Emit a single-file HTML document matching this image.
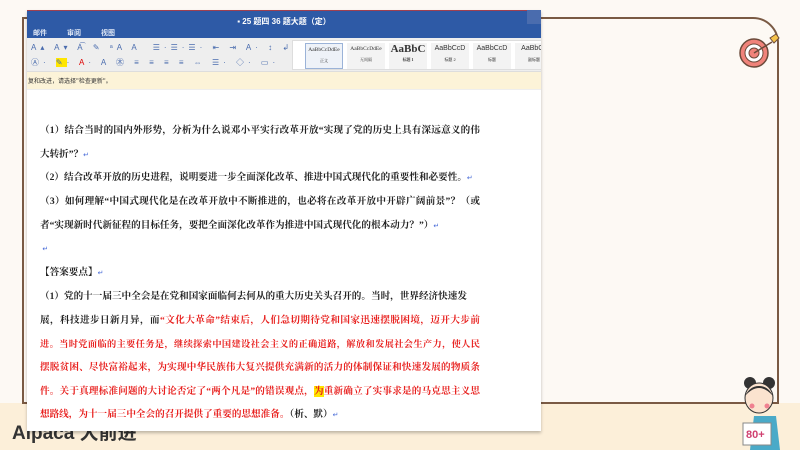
<!DOCTYPE html>
<html><head><meta charset="utf-8">
<style>
*{margin:0;padding:0;box-sizing:border-box}
body{width:800px;height:450px;overflow:hidden;background:#fdf9f4;position:relative;font-family:"Liberation Serif","Noto Serif CJK SC",serif}
.bottom{position:absolute;left:0;top:403px;width:800px;height:47px;background:#fcefd9}
.frame{position:absolute;left:22px;top:17px;width:757px;height:387px;border:2px solid #7a5a44;border-top-right-radius:26px}
.alp{position:absolute;left:12px;top:418px;font:bold 19px "Liberation Sans","Noto Sans CJK SC",sans-serif;color:#333}
.win{position:absolute;left:27px;top:10px;width:514px;height:421px;background:#fff;box-shadow:0 2px 3px rgba(0,0,0,.25);overflow:hidden}
.title{height:28px;background:#2e5aa6;color:#fff;font:bold 8px "Liberation Sans","Noto Sans CJK SC",sans-serif;text-align:center;padding-top:5px;border-top:1px solid #a04050}
.tabs{position:absolute;top:18px;left:6px;color:#dfe7f5;font:bold 7px "Noto Sans CJK SC",sans-serif}
.tabs span{margin-right:20px}
.search{position:absolute;right:0;top:0;width:14px;height:14px;background:#4a6cae}
.tool{height:34px;background:#eeeeee;position:relative;border-bottom:1px solid #ddd}
.gal{position:absolute;left:265px;top:2px;width:260px;height:30px;background:#fff;border:1px solid #ddd}
.st{position:absolute;top:2px;width:38px;height:26px;background:#f3f3f3;font-size:7px;text-align:center;color:#333;line-height:12px}
.st small{display:block;font-size:4px;line-height:10px}
.icons{position:absolute;left:4px;font:8px "Liberation Sans",sans-serif;color:#4a6cae;letter-spacing:4px}
.yel{height:18px;background:#fcf3d8;font:6px "Noto Sans CJK SC",sans-serif;color:#333;padding:4px 0 0 1px;border-bottom:1px solid #eee}
.doc{position:absolute;left:13px;top:113px;width:440px;font-size:9.6px;font-weight:bold;color:#222}
.l{height:23.7px;line-height:16px;white-space:nowrap}
.j{text-align:justify;text-align-last:justify;white-space:normal;height:23.7px;overflow:hidden}
.r{color:#e8201e}
.m{color:#4a6cd8;font-size:7px;font-weight:normal}
.hl{background:#ffe600}
</style></head><body>
<div class="bottom"></div>
<div class="frame"></div>
<div class="alp">Alpaca 大前进</div>
<svg style="position:absolute;left:738px;top:30px" width="50" height="40" viewBox="0 0 50 40">
<circle cx="16" cy="23" r="14" fill="#f0837a" stroke="#6b4a3a" stroke-width="1.5"/>
<circle cx="16" cy="23" r="9" fill="#fff" stroke="#6b4a3a" stroke-width="1"/>
<circle cx="16" cy="23" r="5" fill="#f0837a" stroke="#6b4a3a" stroke-width="1"/>
<line x1="16" y1="23" x2="34" y2="12" stroke="#6b4a3a" stroke-width="1.5"/>
<path d="M32 8 L38 4 L41 8 L36 13 Z" fill="#f5c24a" stroke="#6b4a3a" stroke-width="1"/>
</svg>
<svg style="position:absolute;left:740px;top:374px" width="60" height="76" viewBox="0 0 60 76">
<circle cx="10" cy="9" r="6" fill="#333"/><circle cx="29" cy="9" r="6" fill="#333"/>
<ellipse cx="19" cy="24" rx="14" ry="15" fill="#fbe3cf" stroke="#333"/>
<path d="M5 22 Q19 6 33 22 Q28 12 19 12 Q10 12 5 22Z" fill="#333"/>
<circle cx="12" cy="32" r="2.5" fill="#f08090"/><circle cx="27" cy="32" r="2.5" fill="#f08090"/>
<path d="M14 42 L10 76 L40 76 L36 42Z" fill="#4aaac8"/>
<rect x="3" y="49" width="28" height="22" fill="#fff" stroke="#888"/>
<text x="6" y="64" font-size="11" font-weight="bold" fill="#d04070" font-family="Liberation Sans">80+</text>
</svg>
<div class="win">
<div class="title">▪ 25 题四 36 题大题（定）<div class="search"></div><div class="tabs"><span>邮件</span><span>审阅</span><span>视图</span></div></div>
<div class="tool">
<div class="icons" style="top:5px">A▴ A▾ A͡ ✎ ᵃA A &nbsp;☰·☰·☰· ⇤ ⇥ A· ↕ ↲</div>
<div class="icons" style="top:19px">Ⓐ· <span style="background:#ffe600">✎</span>· <span style="color:#d00">A</span>· A ㊍ ≡ ≡ ≡ ≡ ⇔ ☰· ◇· ▭·</div>
<div class="gal">
<div class="st" style="left:12px;border:1px solid #9bb3d8;background:#eef2f8;font-size:5.5px">AaBbCcDdEe<small>正文</small></div>
<div class="st" style="left:54px;font-size:5.5px">AaBbCcDdEe<small>无间隔</small></div>
<div class="st" style="left:96px;font-size:11px;font-weight:bold">AaBbC<small>标题 1</small></div>
<div class="st" style="left:138px;font-family:'Liberation Sans'">AaBbCcD<small>标题 2</small></div>
<div class="st" style="left:180px;font-family:'Liberation Sans'">AaBbCcD<small>标题</small></div>
<div class="st" style="left:222px;font-family:'Liberation Sans'">AaBbCc<small>副标题</small></div>
</div>
</div>
<div class="yel">复和改进，请选择"检查更新"。</div>
<div class="doc">
<div class="l j">（1）结合当时的国内外形势，分析为什么说邓小平实行改革开放“实现了党的历史上具有深远意义的伟</div>
<div class="l">大转折”？<span class="m">↵</span></div>
<div class="l">（2）结合改革开放的历史进程，说明要进一步全面深化改革、推进中国式现代化的重要性和必要性。<span class="m">↵</span></div>
<div class="l j">（3）如何理解“中国式现代化是在改革开放中不断推进的，也必将在改革开放中开辟广阔前景”？（或</div>
<div class="l">者“实现新时代新征程的目标任务，要把全面深化改革作为推进中国式现代化的根本动力？”）<span class="m">↵</span></div>
<div class="l">&nbsp;<span class="m">↵</span></div>
<div class="l">【答案要点】<span class="m">↵</span></div>
<div class="l">（1）党的十一届三中全会是在党和国家面临何去何从的重大历史关头召开的。当时，世界经济快速发</div>
<div class="l j">展，科技进步日新月异，而<span class="r">“文化大革命”结束后，人们急切期待党和国家迅速摆脱困境，迈开大步前</span></div>
<div class="l j r" style="font-size:9.2px">进。当时党面临的主要任务是，继续探索中国建设社会主义的正确道路，解放和发展社会生产力，使人民</div>
<div class="l j r">摆脱贫困、尽快富裕起来，为实现中华民族伟大复兴提供充满新的活力的体制保证和快速发展的物质条</div>
<div class="l j r">件。关于真理标准问题的大讨论否定了“两个凡是”的错误观点，<span class="hl">为</span>重新确立了实事求是的马克思主义思</div>
<div class="l"><span class="r">想路线，为十一届三中全会的召开提供了重要的思想准备。</span>（析、默）<span class="m">↵</span></div>
</div>
</div>
</body></html>
